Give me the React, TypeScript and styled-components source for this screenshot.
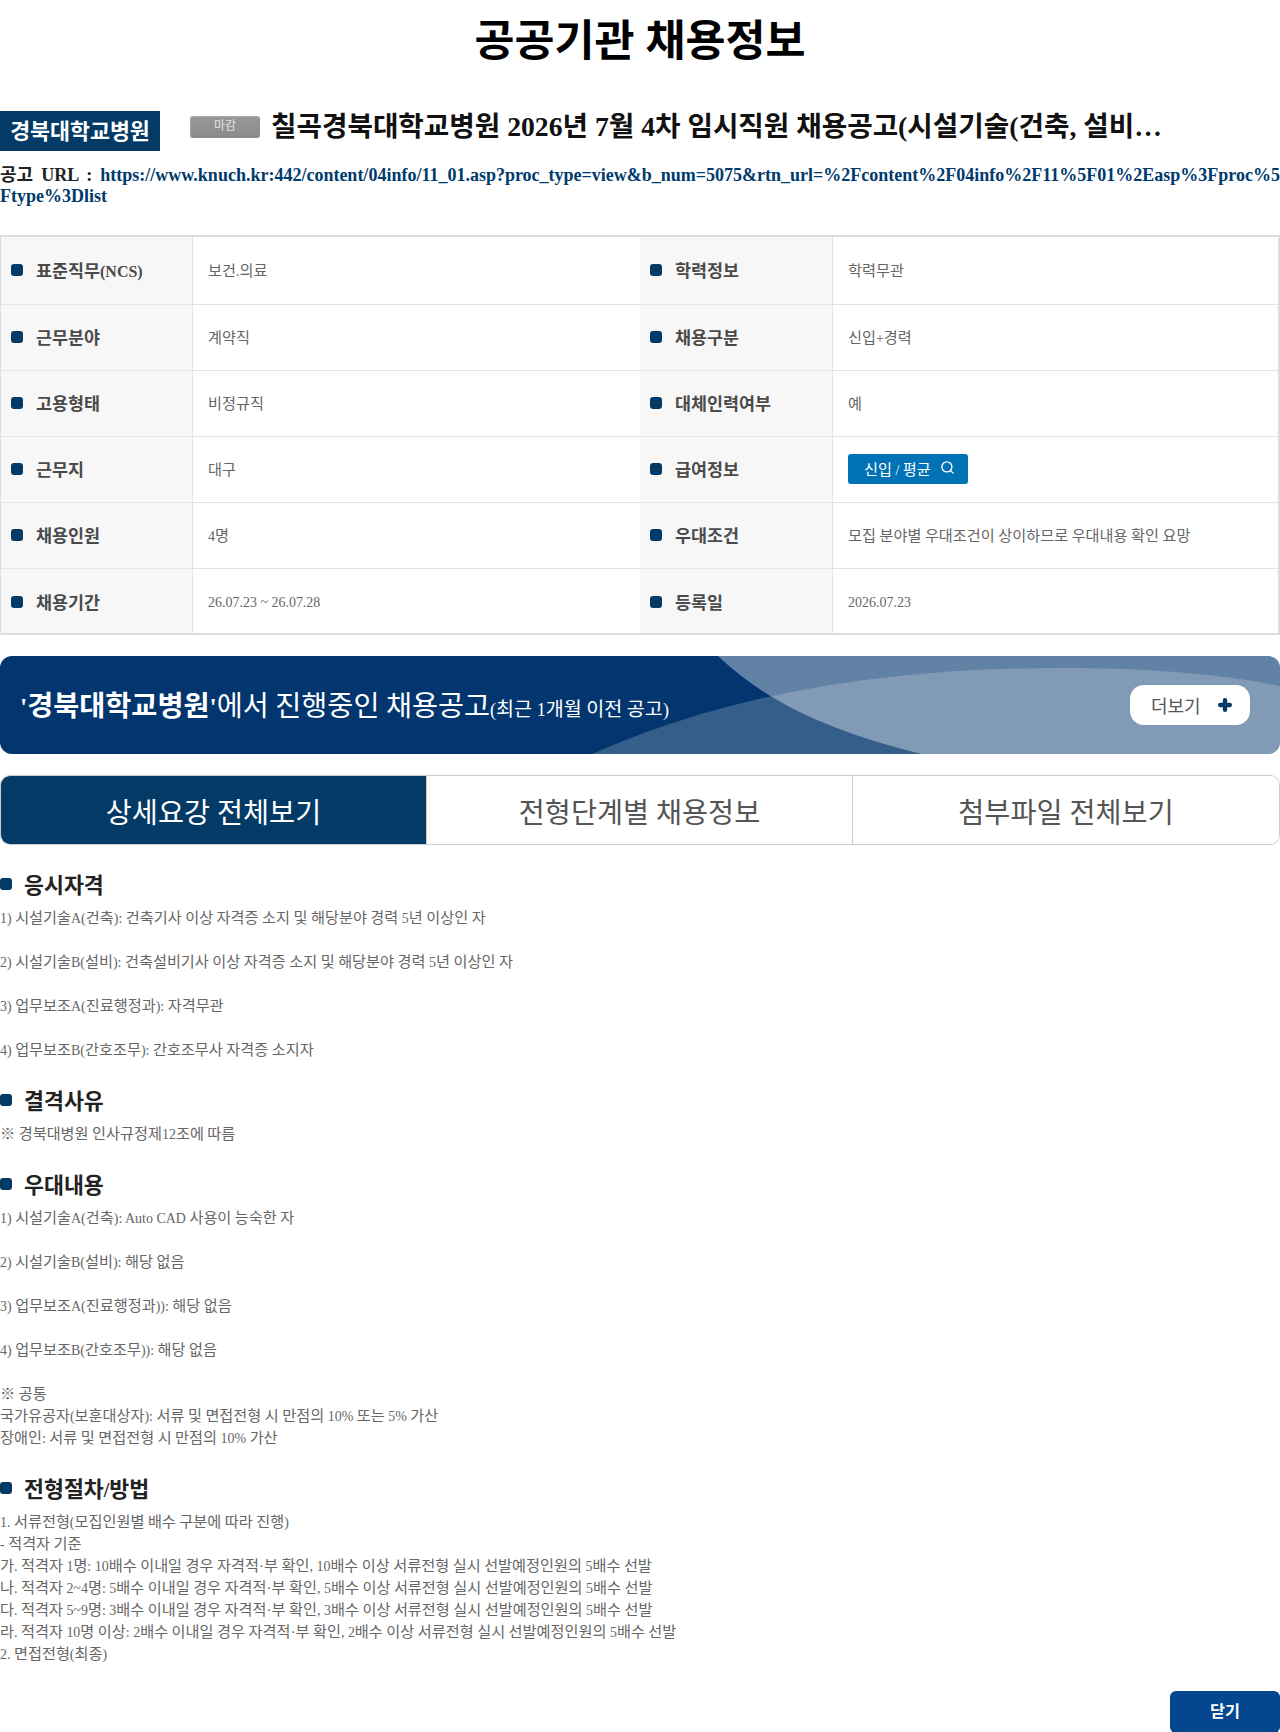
import React, { FC } from 'react'
import styled, { createGlobalStyle } from 'styled-components'
import { Search } from 'lucide-react'

const GlobalStyle = createGlobalStyle`
html, body {
  margin: 0;
  padding: 0;
  background: #fff;
  font-family: "Liberation Serif", "Noto Sans CJK KR", serif;
}
* {
  box-sizing: border-box;
}
`

const Page = styled.div`
width: 1280px;
display: flex;
flex-direction: column;
`

const PageTitle = styled.h1`
margin: 0 0 29px;
height: 82px;
line-height: 82px;
font-size: 43.5px;
font-weight: bold;
color: #000;
text-align: center;
`

const JobHeader = styled.div`
display: flex;
align-items: flex-start;
height: 40px;
`

const OrgName = styled.div`
width: 160px;
height: 40px;
line-height: 42px;
background: #033a66;
color: #fff;
font-size: 21.7px;
font-weight: bold;
text-align: center;
flex-shrink: 0;
`

const StatusBadge = styled.span`
width: 70px;
height: 22px;
margin: 5px 11px 0 30px;
line-height: 20px;
border-radius: 3px;
background: linear-gradient(#999, #8a8a8a);
box-shadow: inset 0 0 0 1px rgba(255, 255, 255, 0.18), inset -1px -1px 0 rgba(0, 0, 0, 0.15);
color: #e2e2e2;
font-size: 12px;
text-align: center;
flex-shrink: 0;
`

const JobTitle = styled.h2`
margin: 0;
width: 891px;
height: 32px;
line-height: 32px;
font-size: 27.7px;
font-weight: bold;
color: #111;
white-space: nowrap;
overflow: hidden;
text-overflow: ellipsis;
`

const UrlLine = styled.p`
margin: 14px 0 28px;
font-size: 18px;
line-height: 21px;
font-weight: bold;
color: #222;
word-break: break-all;
text-align: justify;

a {
  color: #003a6d;
  text-decoration: none;
}
`

const InfoTable = styled.div`
display: flex;
flex-direction: column;
border: 1px solid #ddd;
border-top-width: 2px;
border-bottom-width: 2px;
border-right-width: 2px;
`

const InfoRow = styled.div<{ $height: number }>`
display: grid;
grid-template-columns: 192px 447px 193px 1fr;
height: ${p => p.$height}px;
border-bottom: 1px solid #e4e4e4;

&:last-child {
  border-bottom: 0;
}

&:last-child > div {
  padding-top: 1px;
  padding-bottom: 0;
}
`

const InfoLabel = styled.div`
display: flex;
align-items: center;
gap: 13px;
padding: 0 0 2px 10px;
background: #f7f7f7;
border-right: 1px solid #e4e4e4;
font-size: 17.4px;
font-weight: bold;
color: #4a4a4a;
`

const Bullet = styled.i`
display: block;
width: 12px;
height: 12px;
border-radius: 3px;
background: #033a66;
flex-shrink: 0;
`

const InfoValue = styled.div`
display: flex;
align-items: center;
padding: 0 0 4px 15px;
font-size: 15.2px;
color: #666;
`

const PayButton = styled.a`
display: flex;
align-items: center;
justify-content: space-between;
width: 120px;
height: 30px;
margin-top: 2px;
padding: 0 13px 2px 16px;
border-radius: 3px;
background: #0072b5;
color: #fff;
font-size: 15.2px;
`

const Banner = styled.div`
position: relative;
height: 98px;
margin-top: 21px;
border-radius: 12px;
overflow: hidden;
background: #03366f;
display: flex;
align-items: center;
justify-content: space-between;
padding: 0 30px 0 20px;
`

const BannerArt = styled.svg`
position: absolute;
left: 0;
top: 0;
width: 1280px;
height: 98px;
`

const BannerText = styled.div`
position: relative;
padding-bottom: 4px;
color: #fff;
font-size: 28.3px;

b {
  font-weight: bold;
}

small {
  font-size: 19.6px;
}
`

const MoreButton = styled.a`
position: relative;
display: flex;
align-items: center;
justify-content: space-between;
width: 120px;
height: 40px;
padding: 0 18px 0 21px;
border-radius: 14px;
background: #fff;
color: #555;
font-size: 18px;
`

const Tabs = styled.div`
display: grid;
grid-template-columns: repeat(3, 1fr);
height: 70px;
margin-top: 21px;
border: 1px solid #ccc;
border-radius: 10px;
overflow: hidden;
`

const Tab = styled.div<{ $active?: boolean }>`
display: flex;
align-items: center;
justify-content: center;
font-size: 28.3px;
color: ${p => (p.$active ? '#fff' : '#555')};
background: ${p => (p.$active ? '#033a66' : '#fff')};
border-right: 1px solid #ccc;

&:last-child {
  border-right: 0;
}
`

const Section = styled.section`
margin-top: 24px;
`

const SectionTitle = styled.h3`
display: flex;
align-items: center;
gap: 12px;
height: 30px;
margin: 0 0 8px;
font-size: 21.7px;
font-weight: bold;
color: #222;

span {
  margin-top: -2px;
}
`

const SectionBody = styled.div`
font-size: 15.2px;
line-height: 22px;
color: #666;
white-space: pre-line;
`

const Footer = styled.div`
display: flex;
justify-content: flex-end;
margin-top: 26px;
`

const CloseButton = styled.a`
display: block;
width: 110px;
height: 42px;
line-height: 42px;
border-radius: 6px;
background: #04478f;
color: #fff;
font-size: 16.3px;
font-weight: bold;
text-align: center;
`

// latin runs sit a little smaller than the hangul next to them
const Latin = styled.span`
font-size: 0.92em;
line-height: 0;
`

const mixed = (text: string) => (
  <span>
    {text.split(/([\x20-\x7e]+)/).map((part, index) => (
      index % 2 ? <Latin key={index}>{part}</Latin> : part
    ))}
  </span>
)

const jobUrl = 'https://www.knuch.kr:442/content/04info/11_01.asp?proc_type=view&b_num=5075&rtn_url=%2Fcontent%2F04info%2F11%5F01%2Easp%3Fproc%5Ftype%3Dlist'

const infoRows = [
  { height: 68, left: ['표준직무(NCS)', '보건.의료'], right: ['학력정보', '학력무관'] },
  { height: 66, left: ['근무분야', '계약직'], right: ['채용구분', '신입+경력'] },
  { height: 66, left: ['고용형태', '비정규직'], right: ['대체인력여부', '예'] },
  { height: 66, left: ['근무지', '대구'], right: ['급여정보', ''] },
  { height: 66, left: ['채용인원', '4명'], right: ['우대조건', '모집 분야별 우대조건이 상이하므로 우대내용 확인 요망'] },
  { height: 64, left: ['채용기간', '26.07.23 ~ 26.07.28'], right: ['등록일', '2026.07.23'] },
]

const sections = [
  {
    title: '응시자격',
    body: `1) 시설기술A(건축): 건축기사 이상 자격증 소지 및 해당분야 경력 5년 이상인 자

2) 시설기술B(설비): 건축설비기사 이상 자격증 소지 및 해당분야 경력 5년 이상인 자

3) 업무보조A(진료행정과): 자격무관

4) 업무보조B(간호조무): 간호조무사 자격증 소지자`,
  },
  {
    title: '결격사유',
    body: '※ 경북대병원 인사규정제12조에 따름',
  },
  {
    title: '우대내용',
    body: `1) 시설기술A(건축): Auto CAD 사용이 능숙한 자

2) 시설기술B(설비): 해당 없음

3) 업무보조A(진료행정과)): 해당 없음

4) 업무보조B(간호조무)): 해당 없음

※ 공통
국가유공자(보훈대상자): 서류 및 면접전형 시 만점의 10% 또는 5% 가산
장애인: 서류 및 면접전형 시 만점의 10% 가산`,
  },
  {
    title: '전형절차/방법',
    body: `1. 서류전형(모집인원별 배수 구분에 따라 진행)
- 적격자 기준
가. 적격자 1명: 10배수 이내일 경우 자격적·부 확인, 10배수 이상 서류전형 실시 선발예정인원의 5배수 선발
나. 적격자 2~4명: 5배수 이내일 경우 자격적·부 확인, 5배수 이상 서류전형 실시 선발예정인원의 5배수 선발
다. 적격자 5~9명: 3배수 이내일 경우 자격적·부 확인, 3배수 이상 서류전형 실시 선발예정인원의 5배수 선발
라. 적격자 10명 이상: 2배수 이내일 경우 자격적·부 확인, 2배수 이상 서류전형 실시 선발예정인원의 5배수 선발
2. 면접전형(최종)`,
  },
]

const App: FC = () => {
  const renderValue = (value: string) => {
    if (value) return mixed(value)
    return (
      <PayButton>
        {mixed('신입 / 평균')}
        <Search size={15} strokeWidth={2.2} />
      </PayButton>
    )
  }

  return (
    <Page>
      <GlobalStyle />
      <PageTitle>공공기관 채용정보</PageTitle>

      <JobHeader>
        <OrgName>경북대학교병원</OrgName>
        <StatusBadge>마감</StatusBadge>
        <JobTitle>칠곡경북대학교병원 2026년 7월 4차 임시직원 채용공고(시설기술(건축, 설비, 업무보조(진료행정과, 간호조무))</JobTitle>
      </JobHeader>

      <UrlLine>
        공고 URL : <a>{jobUrl}</a>
      </UrlLine>

      <InfoTable>
        {infoRows.map(row => (
          <InfoRow key={row.left[0]} $height={row.height}>
            <InfoLabel><Bullet />{mixed(row.left[0])}</InfoLabel>
            <InfoValue>{mixed(row.left[1])}</InfoValue>
            <InfoLabel><Bullet />{mixed(row.right[0])}</InfoLabel>
            <InfoValue>{renderValue(row.right[1])}</InfoValue>
          </InfoRow>
        ))}
      </InfoTable>

      <Banner>
        <BannerArt viewBox="0 0 1280 98">
          <path d="M718 0 C 770 50, 840 78, 922 98 L1280 98 L1280 0 Z" fill="#fff" fillOpacity="0.38" />
          <path d="M592 98 C 680 60, 820 12, 1060 12 C 1150 12, 1220 18, 1280 30 L1280 98 Z" fill="#fff" fillOpacity="0.2" />
        </BannerArt>
        <BannerText>
          <b>{mixed("'경북대학교병원'")}</b>{mixed('에서 진행중인 채용공고')}<small>{mixed('(최근 1개월 이전 공고)')}</small>
        </BannerText>
        <MoreButton>
          더보기
          <svg width="14" height="14" viewBox="0 0 14 14">
            <path d="M7 2.2V11.8M2.2 7H11.8" stroke="#033a66" strokeWidth="4.4" strokeLinecap="round" />
          </svg>
        </MoreButton>
      </Banner>

      <Tabs>
        <Tab $active>상세요강 전체보기</Tab>
        <Tab>전형단계별 채용정보</Tab>
        <Tab>첨부파일 전체보기</Tab>
      </Tabs>

      {sections.map(section => (
        <Section key={section.title}>
          <SectionTitle><Bullet />{mixed(section.title)}</SectionTitle>
          <SectionBody>{mixed(section.body)}</SectionBody>
        </Section>
      ))}

      <Footer>
        <CloseButton>닫기</CloseButton>
      </Footer>
    </Page>
  )
}

export default App
